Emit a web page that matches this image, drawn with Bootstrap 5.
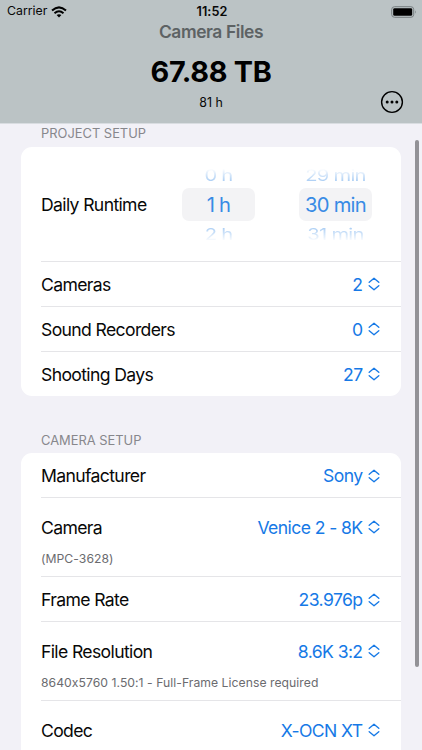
<!DOCTYPE html>
<html lang="en">
<head>
<meta charset="utf-8">
<meta name="viewport" content="width=device-width, initial-scale=1">
<title>Camera Files</title>
<link href="https://cdn.jsdelivr.net/npm/bootstrap@5.3.0/dist/css/bootstrap.min.css" rel="stylesheet">
<style>
html,body{height:750px;overflow:hidden}
body{font-family:Inter,"Liberation Sans",sans-serif;background:#f2f1f7;color:#080808;line-height:1.2}
.top-area{height:124px;background:#bbc3c5;border-bottom:1px solid #d9dde1}
.status{height:23px;font-size:12.3px;padding:0 5px 0 7px}
.clock{font-size:12.7px;font-weight:600;letter-spacing:.1px}
.heading{height:18px;font-size:17.4px;font-weight:600;color:#5d6264;letter-spacing:-.4px}
.total{height:63px;font-size:28.8px;font-weight:700;color:#000;letter-spacing:-.3px}
.hours{margin-top:-8px;font-size:12.4px}
.more-btn{right:18px;bottom:9px;width:24px;height:24px}
.sec-title{font-size:12.9px;color:#87878c;padding-left:41px;height:16px}
.sec-first{margin:2px 0 5px}
.sec-next{margin:36px 0 5px}
.panel{background:#fff;border-radius:11px;margin:0 21px;padding-left:20px}
.item{height:44.8px;padding-top:1px;border-bottom:1px solid #e5e5e8;padding-right:21px;font-size:17.6px;letter-spacing:-.64px;flex-shrink:0}
.item:last-child{border-bottom:0}
.item-runtime{height:115px;padding-right:29px}
.item-note{height:79.1px;padding-top:10px}
.item-line{height:38px}
.note{font-size:12.2px;color:#6b6b6f;letter-spacing:.04px;height:26px}
.val{color:#1679e6;gap:5.5px;letter-spacing:-.6px}
.wheel{width:73px;color:#388be5;font-size:20.2px;letter-spacing:-.75px}
.wheel span{height:33px;border-radius:7px;flex-shrink:0}
.wheel .near{height:26px;line-height:26px;font-size:20.2px;opacity:.45;transform:scaleY(.8)}
.wheel .fade-up{-webkit-mask-image:linear-gradient(transparent 20%,#000 85%)}
.wheel .fade-down{-webkit-mask-image:linear-gradient(#000 15%,transparent 85%)}
.wheel .picked{background:#f3f3f5;padding-top:1px}
.wheels{gap:44px}
.thumb{right:3px;top:140px;width:4px;height:527px;border-radius:2px;background:#939297}
</style>
<script src="https://cdn.jsdelivr.net/npm/bootstrap@5.3.0/dist/js/bootstrap.bundle.min.js"></script>
</head>
<body>
<svg class="d-none" xmlns="http://www.w3.org/2000/svg"><symbol id="updown" viewBox="0 0 12 14"><path d="M1.2 5.2 6 1.3l4.8 3.9M1.2 8.8l4.8 3.9 4.8-3.9" fill="none" stroke="#1679e6" stroke-width="1.4" stroke-linecap="round" stroke-linejoin="round"/></symbol></svg>
<header class="top-area position-relative text-center">
  <div class="status row g-0 align-items-center">
    <div class="col d-flex align-items-center gap-1"><span>Carrier</span>
      <svg width="16" height="12" viewBox="0 0 16 12"><g fill="none" stroke="#000" stroke-width="2"><path d="M1 4.6Q8-1.8 15 4.6"/><path d="M3.5 7.2q4.5-4 9 0"/></g><path d="M5.6 9.1q2.4-1.9 4.8 0L8 11.5z"/></svg></div>
    <div class="col-auto clock">11:52</div>
    <div class="col d-flex justify-content-end"><svg width="26" height="12" viewBox="0 0 26 12"><rect x=".7" y=".7" width="22" height="10.6" rx="2.8" fill="none" stroke="#777e80"/><rect x="2.2" y="2.2" width="19" height="7.6" rx="1.4"/><path d="M24 4.3q1.6 1.7 0 3.4z" fill="#777e80"/></svg></div>
  </div>
  <div class="heading d-flex align-items-center justify-content-center">Camera Files</div>
  <div class="total d-flex align-items-center justify-content-center">67.88 TB</div>
  <div class="hours">81 h</div>
  <svg class="more-btn position-absolute" viewBox="0 0 24 24"><circle cx="12" cy="12" r="10.4" fill="none" stroke="#000" stroke-width="1.4"/><circle cx="7.2" cy="12" r="1.5"/><circle cx="12" cy="12" r="1.5"/><circle cx="16.8" cy="12" r="1.5"/></svg>
</header>
<main>
  <h2 class="sec-title sec-first fw-normal d-flex align-items-center">PROJECT SETUP</h2>
  <section class="panel d-flex flex-column">
    <div class="item item-runtime d-flex align-items-center justify-content-between"><span>Daily Runtime</span>
      <div class="wheels d-flex">
        <div class="wheel d-flex flex-column justify-content-center text-center"><span class="near fade-up">0 h</span><span class="picked d-flex align-items-center justify-content-center">1 h</span><span class="near fade-down">2 h</span></div>
        <div class="wheel d-flex flex-column justify-content-center text-center"><span class="near fade-up">29 min</span><span class="picked d-flex align-items-center justify-content-center">30 min</span><span class="near fade-down">31 min</span></div>
      </div></div>
    <div class="item d-flex align-items-center justify-content-between"><span>Cameras</span><span class="val d-flex align-items-center">2 <svg width="12" height="14"><use href="#updown"/></svg></span></div>
    <div class="item d-flex align-items-center justify-content-between"><span>Sound Recorders</span><span class="val d-flex align-items-center">0 <svg width="12" height="14"><use href="#updown"/></svg></span></div>
    <div class="item d-flex align-items-center justify-content-between"><span>Shooting Days</span><span class="val d-flex align-items-center">27 <svg width="12" height="14"><use href="#updown"/></svg></span></div>
  </section>
  <h2 class="sec-title sec-next fw-normal d-flex align-items-center">CAMERA SETUP</h2>
  <section class="panel d-flex flex-column">
    <div class="item d-flex align-items-center justify-content-between"><span>Manufacturer</span><span class="val d-flex align-items-center">Sony <svg width="12" height="14"><use href="#updown"/></svg></span></div>
    <div class="item item-note"><div class="item-line d-flex align-items-center justify-content-between"><span>Camera</span><span class="val d-flex align-items-center">Venice 2 - 8K <svg width="12" height="14"><use href="#updown"/></svg></span></div><div class="note d-flex align-items-center">(MPC-3628)</div></div>
    <div class="item d-flex align-items-center justify-content-between"><span>Frame Rate</span><span class="val d-flex align-items-center">23.976p <svg width="12" height="14"><use href="#updown"/></svg></span></div>
    <div class="item item-note"><div class="item-line d-flex align-items-center justify-content-between"><span>File Resolution</span><span class="val d-flex align-items-center">8.6K 3:2 <svg width="12" height="14"><use href="#updown"/></svg></span></div><div class="note d-flex align-items-center">8640x5760 1.50:1 - Full-Frame License required</div></div>
    <div class="item item-note"><div class="item-line d-flex align-items-center justify-content-between"><span>Codec</span><span class="val d-flex align-items-center">X-OCN XT <svg width="12" height="14"><use href="#updown"/></svg></span></div></div>
  </section>
</main>
<div class="thumb position-fixed"></div>
</body>
</html>
